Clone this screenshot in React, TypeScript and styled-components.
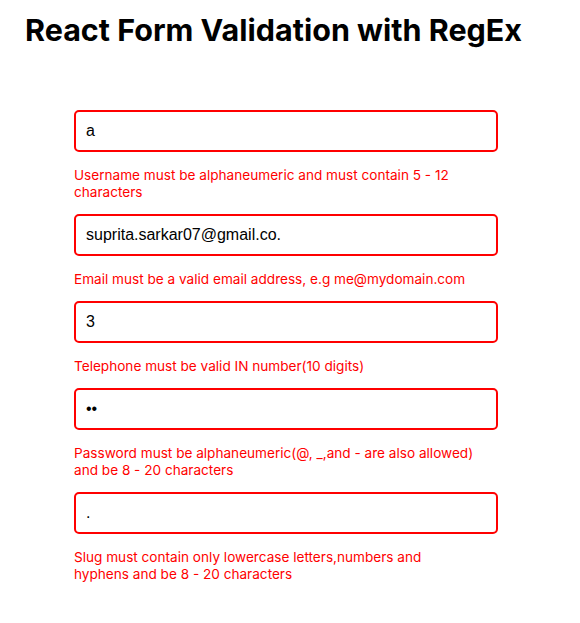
import React from "react";
import styled, { createGlobalStyle } from "styled-components";

const GlobalStyle = createGlobalStyle`
  html, body {
    margin: 0;
    padding: 0;
    background: #ffffff;
  }
  body {
    font-family: Inter, "Liberation Sans", Arial, sans-serif;
  }
  * { box-sizing: border-box; }
`;

const Page = styled.div`
  padding-top: 12px;
  width: 580px;
`;

const Title = styled.h1`
  margin: 0 0 0 25px;
  font-family: Inter, "Noto Sans", sans-serif;
  font-weight: 700;
  font-size: 30.5px;
  line-height: 36px;
  color: #000;
`;

const Form = styled.form`
  margin: 62px 0 0 74px;
  width: 424px;
  display: flex;
  flex-direction: column;
`;

const Field = styled.div`
  display: flex;
  flex-direction: column;
  gap: 15px;
  margin-bottom: 13px;
`;

const Input = styled.input<{ $invalid?: boolean }>`
  width: 100%;
  height: 42px;
  padding: 0 10px;
  border: 2px solid ${(p) => (p.$invalid ? "#ff0000" : "#ccc")};
  border-radius: 5px;
  font-family: "Liberation Sans", Arial, sans-serif;
  font-size: 16px;
  color: #000;
  outline: none;
  background: #fff;
`;

const ErrorText = styled.span`
  display: block;
  max-width: 402px;
  font-family: Inter, "Liberation Sans", Arial, sans-serif;
  font-size: 13.6px;
  line-height: 17px;
  color: #ff0000;
`;

const fields = [
  {
    name: "username",
    type: "text",
    value: "a",
    error: "Username must be alphaneumeric and must contain 5 - 12 characters",
  },
  {
    name: "email",
    type: "text",
    value: "suprita.sarkar07@gmail.co.",
    error: "Email must be a valid email address, e.g me@mydomain.com",
  },
  {
    name: "telephone",
    type: "text",
    value: "3",
    error: "Telephone must be valid IN number(10 digits)",
  },
  {
    name: "password",
    type: "password",
    value: "ab",
    error:
      "Password must be alphaneumeric(@, _,and - are also allowed) and be 8 - 20 characters",
  },
  {
    name: "slug",
    type: "text",
    value: ".",
    error:
      "Slug must contain only lowercase letters,numbers and hyphens and be 8 - 20 characters",
  },
];

export default function App() {
  return (
    <>
      <GlobalStyle />
      <Page>
        <Title>React Form Validation with RegEx</Title>
        <Form onSubmit={(e) => e.preventDefault()}>
          {fields.map((f) => (
            <Field key={f.name}>
              <Input
                $invalid
                name={f.name}
                type={f.type}
                defaultValue={f.value}
              />
              <ErrorText>{f.error}</ErrorText>
            </Field>
          ))}
        </Form>
      </Page>
    </>
  );
}
